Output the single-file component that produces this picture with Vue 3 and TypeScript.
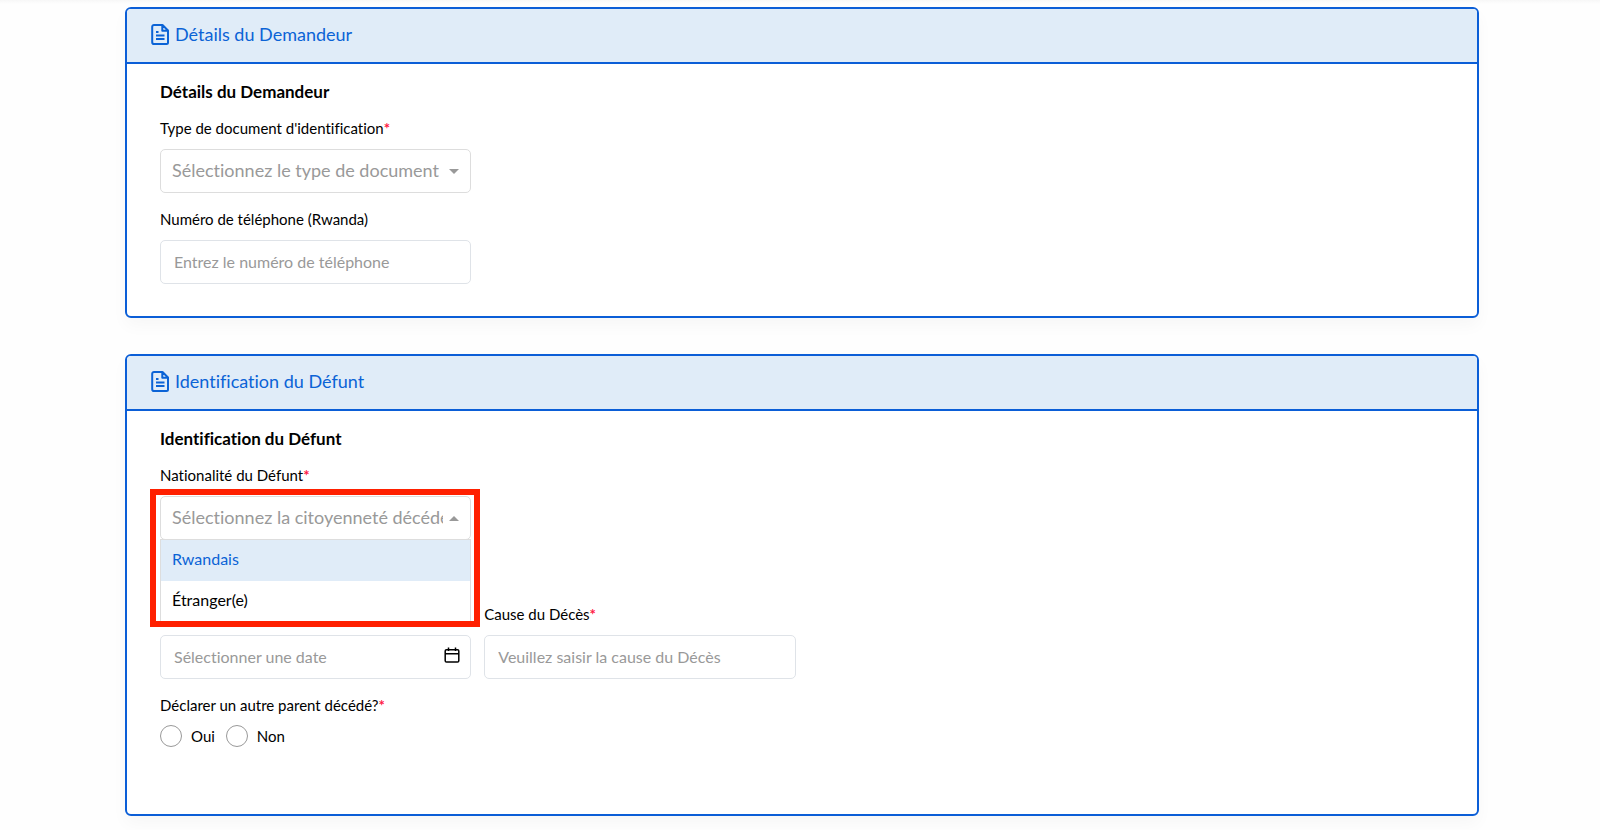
<script setup lang="ts">
import { ref } from 'vue'

const documentType = ref('')
const phone = ref('')
const nationality = ref('')
const deathDate = ref('')
const cause = ref('')
const another = ref('')
const menuOpen = ref(true)
const nationalities = ['Rwandais', 'Étranger(e)']

function toggleMenu() {
  menuOpen.value = !menuOpen.value
}

function choose(value: string) {
  nationality.value = value
  menuOpen.value = false
}
</script>

<template>
  <main class="page">
    <section class="card">
      <header class="card-header">
        <svg class="doc-icon" viewBox="0 0 18 22" aria-hidden="true">
          <path d="M3 1h8.500L17 6.500V18.500a1.500 1.500 0 0 1-1.500 1.500H3A1.800 1.800 0 0 1 1.200 18.200V2.800A1.800 1.800 0 0 1 3 1zM11.300 1v5.700H17M5 8h2.500M5 11.500h8.500M5 15h8.500" />
        </svg>
        <span>Détails du Demandeur</span>
      </header>
      <div class="card-body">
        <h2>Détails du Demandeur</h2>
        <div class="grid">
          <div class="field first">
            <label for="document-type">Type de document d'identification<b>*</b></label>
            <div class="control">
              <select id="document-type" v-model="documentType">
                <option value="">Sélectionnez le type de document</option>
              </select>
              <svg class="caret" viewBox="0 0 10 5" aria-hidden="true"><path d="M0 0h10L5 5z" /></svg>
            </div>
          </div>
          <div class="field first">
            <label for="phone">Numéro de téléphone (Rwanda)</label>
            <input id="phone" v-model="phone" type="text" placeholder="Entrez le numéro de téléphone" />
          </div>
        </div>
      </div>
    </section>

    <section class="card">
      <header class="card-header">
        <svg class="doc-icon" viewBox="0 0 18 22" aria-hidden="true">
          <path d="M3 1h8.500L17 6.500V18.500a1.500 1.500 0 0 1-1.500 1.500H3A1.800 1.800 0 0 1 1.200 18.200V2.800A1.800 1.800 0 0 1 3 1zM11.300 1v5.700H17M5 8h2.500M5 11.500h8.500M5 15h8.500" />
        </svg>
        <span>Identification du Défunt</span>
      </header>
      <div class="card-body tall">
        <h2>Identification du Défunt</h2>
        <div class="grid">
          <div class="field first spaced">
            <label for="nationality">Nationalité du Défunt<b>*</b></label>
            <div class="control">
              <select id="nationality" v-model="nationality" @mousedown.prevent="toggleMenu">
                <option value="">Sélectionnez la citoyenneté décédée</option>
                <option v-for="item in nationalities" :key="item" :value="item">{{ item }}</option>
              </select>
              <svg class="caret" viewBox="0 0 10 5" aria-hidden="true"><path d="M0 5h10L5 0z" /></svg>
              <div v-if="menuOpen" class="menu">
                <button
                  v-for="(item, index) in nationalities"
                  :key="item"
                  type="button"
                  :class="{ active: index === 0 }"
                  @click="choose(item)"
                >{{ item }}</button>
              </div>
              <div v-if="menuOpen" class="highlight"></div>
            </div>
          </div>
          <div class="field first bottom">
            <div class="control">
              <input v-model="deathDate" type="text" aria-label="Date du Décès" placeholder="Sélectionner une date" />
              <button class="calendar" type="button" aria-label="Calendrier">
                <svg viewBox="0 0 16 16" aria-hidden="true">
                  <path d="M2.500 2.800h11a1.300 1.300 0 0 1 1.300 1.300v9.600a1.300 1.300 0 0 1-1.300 1.300h-11a1.300 1.300 0 0 1-1.300-1.300V4.100a1.300 1.300 0 0 1 1.300-1.300zM1.200 6.800h13.600M4.500 0.500v3.500M11.500 0.500v3.500" />
                </svg>
              </button>
            </div>
          </div>
          <div class="field">
            <label for="cause">Cause du Décès<b>*</b></label>
            <input id="cause" v-model="cause" type="text" placeholder="Veuillez saisir la cause du Décès" />
          </div>
          <fieldset class="field first">
            <legend>Déclarer un autre parent décédé?<b>*</b></legend>
            <div class="radios">
              <label><input v-model="another" type="radio" name="another" value="oui" />Oui</label>
              <label><input v-model="another" type="radio" name="another" value="non" />Non</label>
            </div>
          </fieldset>
        </div>
      </div>
    </section>
  </main>
</template>

<style>
body {
  margin: 0;
  background: #fefefe;
}
</style>

<style scoped>
* {
  box-sizing: border-box;
}

.page {
  display: flex;
  flex-direction: column;
  gap: 36px;
  padding: 7px 121px 14px 125px;
  background: linear-gradient(#f7f7f7, #fefefe 4px);
  color: #000;
  font: 15px/22px Lato, "Noto Sans", sans-serif;
  font-variant-ligatures: none;
}

.card {
  border: 2px solid #0b5ed7;
  border-radius: 6px;
  background: #fff;
  box-shadow: 0 8px 16px rgba(0, 0, 0, 0.03);
}

.card-header {
  display: flex;
  align-items: center;
  gap: 6px;
  padding: 13px 24px 15px;
  border-bottom: 2px solid #0b5ed7;
  border-radius: 4px 4px 0 0;
  background: #e0ecf8;
  color: #0b63d6;
  font-size: 18px;
  line-height: 25px;
}

.doc-icon {
  width: 18px;
  height: 22px;
  fill: none;
  stroke: currentColor;
  stroke-width: 2;
  stroke-linejoin: round;
}

.card-body {
  padding: 17px 33px 32px;
}

.card-body.tall {
  padding-bottom: 67px;
}

h2 {
  margin: 0 0 14px;
  font-size: 17px;
  line-height: 22px;
  font-weight: 700;
}

.grid {
  display: grid;
  grid-template-columns: repeat(4, 1fr);
  gap: 15px 13px;
}

.field {
  display: flex;
  flex-direction: column;
  gap: 10px;
  min-width: 0;
  margin: 0;
  padding: 0;
  border: 0;
}

.first {
  grid-column-start: 1;
}

.bottom {
  align-self: end;
}

.spaced {
  margin-bottom: 48px;
}

b {
  color: #ff1744;
  font-weight: 700;
}

.control {
  position: relative;
}

select,
input[type='text'] {
  display: block;
  width: 100%;
  height: 44px;
  padding: 0 13px 2px;
  border: 1px solid #dfe3e8;
  border-radius: 5px;
  background: #fff;
  color: #999;
  font: inherit;
  font-size: 16px;
  font-variant-ligatures: none;
  outline: none;
}

select {
  padding: 0 27px 2px 11px;
  border-color: #ddd;
  appearance: none;
  font-size: 18px;
}

input::placeholder {
  color: #999;
  opacity: 1;
}

.caret {
  position: absolute;
  top: 20px;
  right: 12px;
  width: 10px;
  height: 5px;
  fill: #999;
  pointer-events: none;
}

.menu {
  position: absolute;
  z-index: 2;
  top: 43px;
  left: 0;
  right: 0;
  border: 1px solid #ddd;
  background: #fff;
}

.menu button {
  display: block;
  width: 100%;
  height: 41px;
  padding: 0 11px 3px;
  border: 0;
  background: #fff;
  color: #000;
  font: inherit;
  font-size: 16px;
  text-align: left;
}

.menu button.active {
  background: #e0ecf8;
  color: #0b63d6;
}

.highlight {
  position: absolute;
  z-index: 3;
  inset: -7px -9px -87px -10px;
  border: 6px solid #ff2000;
  pointer-events: none;
}

.calendar {
  position: absolute;
  top: 12px;
  right: 11px;
  width: 16px;
  height: 16px;
  padding: 0;
  border: 0;
  background: none;
}

.calendar svg {
  display: block;
  fill: none;
  stroke: #000;
  stroke-width: 1.500;
}

legend {
  margin-bottom: 9px;
  padding: 0;
}

.radios {
  display: flex;
  gap: 11px;
}

.radios label {
  display: flex;
  align-items: center;
  gap: 9px;
}

.radios input {
  width: 22px;
  height: 22px;
  margin: 0;
  border: 1px solid #999;
  border-radius: 50%;
  background: #fff;
  appearance: none;
}

.radios input:checked {
  border: 6px solid #0b63d6;
}
</style>
